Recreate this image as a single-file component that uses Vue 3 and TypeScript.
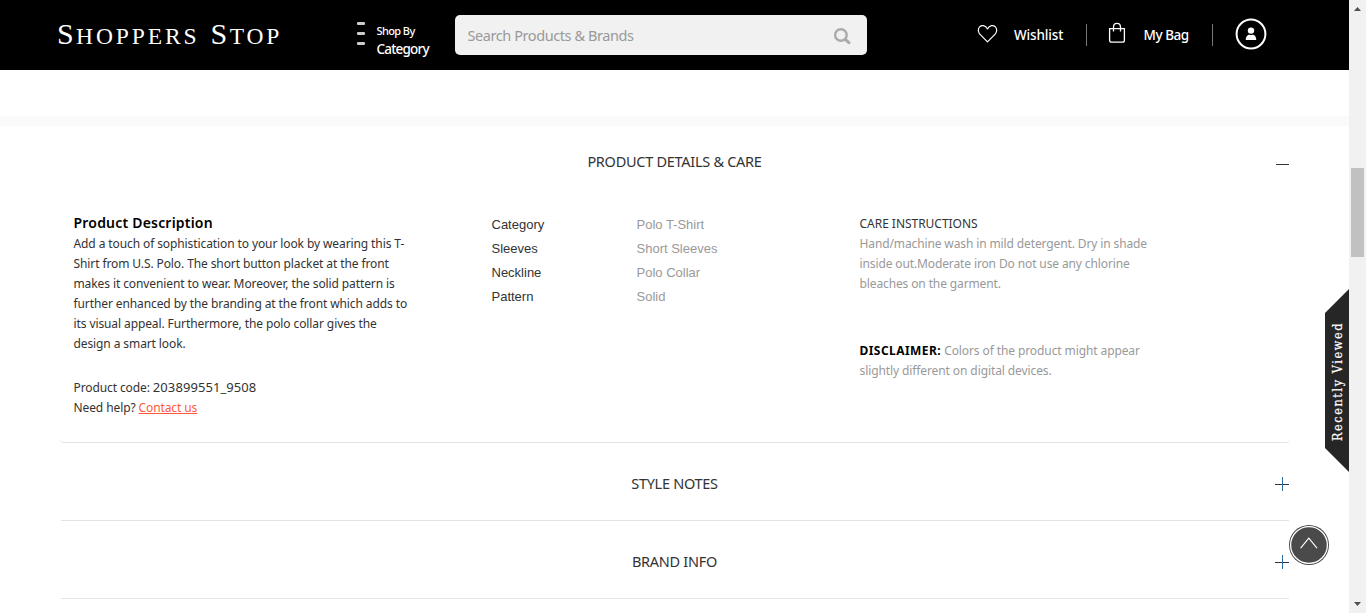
<script setup lang="ts">
interface Attribute {
  name: string
  value: string
}

const description: string[] = [
  'Add a touch of sophistication to your look by wearing this T-',
  'Shirt from U.S. Polo. The short button placket at the front',
  'makes it convenient to wear. Moreover, the solid pattern is',
  'further enhanced by the branding at the front which adds to',
  'its visual appeal. Furthermore, the polo collar gives the',
  'design a smart look.',
]

const attributes: Attribute[] = [
  { name: 'Category', value: 'Polo T-Shirt' },
  { name: 'Sleeves', value: 'Short Sleeves' },
  { name: 'Neckline', value: 'Polo Collar' },
  { name: 'Pattern', value: 'Solid' },
]

const care: string[] = [
  'Hand/machine wash in mild detergent. Dry in shade',
  'inside out.Moderate iron Do not use any chlorine',
  'bleaches on the garment.',
]

const collapsed: string[] = ['STYLE NOTES', 'BRAND INFO']
</script>

<template>
  <div class="window">
    <div class="page">
      <header class="header">
        <div class="logo">
          <span class="word"><b>S</b>HOPPERS</span>
          <span class="word"><b>S</b>TOP</span>
        </div>
        <div class="burger"><i></i><i></i><i></i></div>
        <div class="shop">
          <span class="shop-by">Shop By</span>
          <span class="shop-cat">Category</span>
        </div>
        <div class="search">
          <span>Search Products &amp; Brands</span>
          <svg width="18" height="18" viewBox="0 0 18 18" fill="none" stroke="#aaa">
            <circle cx="7.9" cy="7" r="5.8" stroke-width="2.4" />
            <path d="M12.2 11.3 L15.9 14.7" stroke-width="3" stroke-linecap="round" />
          </svg>
        </div>
        <svg class="heart" width="22" height="20" viewBox="0 0 22 20" fill="none" stroke="#fff" stroke-width="1.2">
          <path d="M10.5 17.8 L2.6 9.8 C0.9 8 0.9 4.5 2.6 2.8 C4.4 0.9 8.6 0.9 10.5 4.9 C12.4 0.9 16.6 0.9 18.4 2.8 C20.1 4.5 20.1 8 18.4 9.8 Z" stroke-linejoin="round" />
        </svg>
        <span class="nav wishlist">Wishlist</span>
        <i class="bar"></i>
        <svg class="bag" width="18" height="22" viewBox="0 0 18 22" fill="none" stroke="#fff" stroke-width="1.3">
          <path d="M1.6 6.6 H16.4 V18.2 Q16.4 20.2 14.4 20.2 H3.6 Q1.6 20.2 1.6 18.2 Z" />
          <path d="M5.5 9.5 V5 C5.5 0.2 12.5 0.2 12.5 5 V9.5" />
        </svg>
        <span class="nav mybag">My Bag</span>
        <i class="bar"></i>
        <svg class="user" width="32" height="32" viewBox="0 0 32 32">
          <circle cx="16" cy="16" r="14.4" fill="none" stroke="#fff" stroke-width="2" />
          <circle cx="16" cy="12.6" r="3.2" fill="#fff" />
          <path d="M10.8 22 V20.5 Q11.2 17.3 14 16.4 Q16 17.6 18 16.4 Q20.8 17.3 21.2 20.5 V22 Z" fill="#fff" />
        </svg>
      </header>

      <div class="band"></div>

      <section class="panel open">
        <h2 class="title">PRODUCT DETAILS &amp; CARE</h2>
        <i class="sign minus"></i>
        <div class="columns">
          <div class="description">
            <h3>Product Description</h3>
            <p><span v-for="line in description" :key="line" class="line">{{ line }}</span></p>
            <p class="code">Product code: <b>203899551_9508</b></p>
            <p class="help">Need help? <a>Contact us</a></p>
          </div>
          <dl class="attributes">
            <template v-for="item in attributes" :key="item.name">
              <dt>{{ item.name }}</dt>
              <dd>{{ item.value }}</dd>
            </template>
          </dl>
          <div class="care">
            <h4>CARE INSTRUCTIONS</h4>
            <p><span v-for="line in care" :key="line" class="line">{{ line }}</span></p>
            <p class="disclaimer">
              <span class="line"><strong>DISCLAIMER:</strong> Colors of the product might appear</span>
              <span class="line">slightly different on digital devices.</span>
            </p>
          </div>
        </div>
      </section>

      <section v-for="name in collapsed" :key="name" class="panel closed">
        <h2 class="title">{{ name }}</h2>
        <i class="sign plus"></i>
      </section>

      <div class="recent"><span>Recently Viewed</span></div>

      <svg class="to-top" width="40" height="40" viewBox="0 0 40 40">
        <circle cx="20" cy="20" r="20" fill="#4a4a4a" />
        <circle cx="20" cy="20" r="18.4" fill="#4a4a4a" stroke="#fff" stroke-width="1.3" />
        <path d="M11.6 23.2 L19.8 13.2 L28 23.2" fill="none" stroke="#fff" stroke-width="1.1" />
      </svg>
    </div>

    <div class="scrollbar">
      <i class="arrow up"></i>
      <i class="thumb"></i>
      <i class="arrow down"></i>
    </div>
  </div>
</template>

<style>
html,
body {
  margin: 0;
  overflow: hidden;
  background: #fff;
}
</style>

<style scoped>
.window {
  display: flex;
  width: 1366px;
  height: 613px;
  overflow: hidden;
  font-family: 'Noto Sans', 'Open Sans', sans-serif;
  color: #333;
}
.page {
  position: relative;
  width: 1349px;
  height: 613px;
  overflow: hidden;
  background: #fff;
}
h2, h3, h4, p, dl, dt, dd {
  margin: 0;
  font-weight: 400;
}
.header {
  display: flex;
  align-items: flex-start;
  height: 70px;
  background: #000;
  color: #fff;
}
.header > * { flex: none; }
.logo {
  display: flex;
  gap: 11px;
  width: 230px;
  margin: 16px 0 0 57px;
  font-family: 'Liberation Serif', serif;
  font-size: 23.5px;
  line-height: 36px;
  letter-spacing: 2.9px;
  white-space: nowrap;
}
.logo b { font-weight: 400; font-size: 30px; letter-spacing: 2.4px; }
.burger {
  display: flex;
  flex-direction: column;
  gap: 7px;
  margin: 22px 0 0 70px;
  width: 8px;
}
.burger i {
  height: 3px;
  border-radius: 1px;
  background: #ccc;
}
.shop {
  display: flex;
  flex-direction: column;
  width: 78.5px;
  margin: 22px 0 0 11.5px;
  white-space: nowrap;
}
.shop-by { font-size: 11px; line-height: 18px; letter-spacing: -0.6px; font-weight: 500; }
.shop-cat { font-size: 13.5px; line-height: 19px; letter-spacing: -0.8px; font-weight: 500; }
.search {
  display: flex;
  justify-content: space-between;
  align-items: center;
  box-sizing: border-box;
  width: 412px;
  height: 40px;
  margin-top: 15px;
  padding: 0 16px 0 12.5px;
  border-radius: 5px;
  background: #f1f1f1;
  color: #999;
  font-size: 14.5px;
  letter-spacing: -0.42px;
}
.search svg { margin-top: 3px; }
.heart { margin: 24px 0 0 110px; }
.nav {
  font-size: 13.5px;
  line-height: 20px;
  margin-top: 25px;
  white-space: nowrap;
  font-weight: 500;
}
.wishlist { width: 72px; margin-left: 15px; letter-spacing: -0.15px; }
.bar { width: 1px; height: 22px; margin-top: 24px; background: #777; }
.bag { margin: 22px 0 0 21px; }
.mybag { width: 68.5px; margin-left: 17.5px; letter-spacing: -0.45px; }
.user { margin: 18px 0 0 22px; }
.band { height: 10px; margin-top: 46px; background: #fafafa; }
.panel {
  display: grid;
  grid-template-columns: 1fr 14px;
  align-items: center;
  box-sizing: border-box;
  margin: 0 59px 0 60px;
  border-bottom: 1px solid #e3e3e3;
}
.open {
  height: 317px;
  grid-template-rows: 72px 1fr;
  border-radius: 4px;
}
.closed { height: 78px; margin-left: 61px; margin-right: 60px; }
.title {
  padding: 0 0 2px 13px;
  text-align: center;
  font-size: 14.5px;
  line-height: 20px;
  letter-spacing: -0.28px;
}
.closed .title { padding: 3px 0 0 13px; }
.sign { position: relative; width: 14px; height: 14px; }
.sign::before,
.plus::after {
  content: '';
  position: absolute;
  background: #26364a;
}
.minus::before { left: 0; top: 9px; width: 13px; height: 1px; background: #333; }
.plus::before { left: 0; top: 9px; width: 14px; height: 1px; }
.plus::after { left: 7px; top: 2px; width: 1px; height: 14px; background: #2d6c9c; }
.columns {
  grid-column: 1 / 3;
  align-self: start;
  display: flex;
  padding-left: 13.5px;
}
.line { display: block; white-space: nowrap; }
.description {
  width: 418px;
  padding-top: 15px;
  font-size: 12px;
  line-height: 20px;
  letter-spacing: -0.1px;
}
.description h3 {
  margin-bottom: 1px;
  font-size: 14px;
  line-height: 20px;
  font-weight: 600;
  color: #000;
  letter-spacing: 0.2px;
}
.code { margin-top: 23px; }
.code b { font-weight: 400; font-size: 13px; letter-spacing: 0.07px; }
.help a { color: #ff5a3c; text-decoration: underline; }
.attributes {
  display: grid;
  grid-template-columns: 145px 223px;
  grid-auto-rows: 24px;
  padding-top: 15px;
  font: 13px/24px 'Liberation Sans', Arial, sans-serif;
}
.attributes dd { color: #999; }
.care {
  padding-top: 16px;
  font-size: 12px;
  line-height: 20px;
  color: #999;
  letter-spacing: -0.12px;
}
.care h4 { font-size: 12px; line-height: 20px; color: #333; letter-spacing: -0.03px; }
.disclaimer { margin-top: 47px; letter-spacing: -0.1px; }
.disclaimer strong { color: #000; font-weight: 700; letter-spacing: 0.45px; }
.recent {
  position: absolute;
  left: 1325px;
  top: 289px;
  width: 24px;
  height: 183px;
  display: flex;
  align-items: center;
  justify-content: center;
  background: #262626;
  clip-path: polygon(0 24px, 100% 0, 100% 100%, 0 159px);
}
.recent span {
  margin: 1px 0 0 2px;
  writing-mode: vertical-rl;
  transform: rotate(180deg);
  white-space: nowrap;
  color: #fff;
  font: 12.5px/22px 'DejaVu Serif Condensed', 'DejaVu Serif', serif;
  font-stretch: condensed;
  letter-spacing: 1.6px;
  -webkit-text-stroke: 0.2px #fff;
}
.to-top { position: absolute; left: 1289px; top: 525px; }
.scrollbar {
  display: flex;
  flex-direction: column;
  align-items: center;
  width: 17px;
  height: 613px;
  background: #f1f1f1;
}
.arrow { width: 7px; height: 4px; background: #505050; }
.up { margin-top: 7px; clip-path: polygon(0 100%, 50% 0, 100% 100%); }
.thumb { width: 13px; height: 89px; margin-top: 157px; background: #c1c1c1; }
.down { margin-top: 345px; clip-path: polygon(0 0, 100% 0, 50% 100%); }
</style>
